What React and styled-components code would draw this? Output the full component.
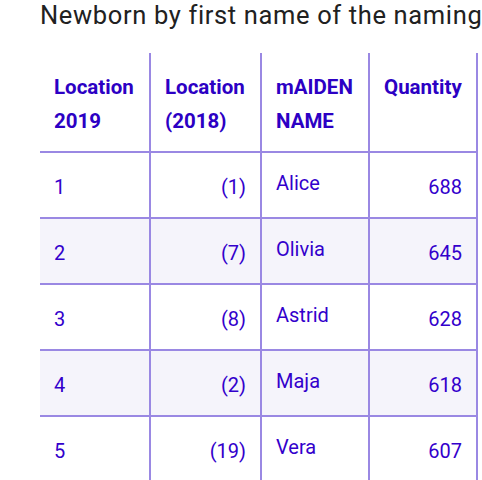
import React from "react";
import styled, { createGlobalStyle } from "styled-components";

const GlobalStyle = createGlobalStyle`
  body {
    margin: 0;
    background: #ffffff;
    font-family: Roboto, "Liberation Sans", Arial, sans-serif;
  }
`;

const rows = [
  { pos: 1, prev: "(1)", name: "Alice", qty: 688 },
  { pos: 2, prev: "(7)", name: "Olivia", qty: 645 },
  { pos: 3, prev: "(8)", name: "Astrid", qty: 628 },
  { pos: 4, prev: "(2)", name: "Maja", qty: 618 },
  { pos: 5, prev: "(19)", name: "Vera", qty: 607 },
];

const App = () => {
  return (
    <>
      <GlobalStyle />
      <Page>
        <Title>Newborn by first name of the naming</Title>
        <Table>
          <colgroup>
            <col style={{ width: 111 }} />
            <col style={{ width: 111 }} />
            <col style={{ width: 108 }} />
            <col style={{ width: 108 }} />
          </colgroup>
          <thead>
            <tr>
              <Th>Location<br />2019</Th>
              <Th>Location<br />(2018)</Th>
              <Th>mAIDEN<br />NAME</Th>
              <Th>Quantity</Th>
            </tr>
          </thead>
          <tbody>
            {rows.map((r) => (
              <Row key={r.pos} $striped={r.pos % 2 === 0}>
                <Td>{r.pos}</Td>
                <Td $right>{r.prev}</Td>
                <Td $raised>{r.name}</Td>
                <Td $right>{r.qty}</Td>
              </Row>
            ))}
          </tbody>
        </Table>
      </Page>
    </>
  );
};

export default App;

const Page = styled.div`
  padding-left: 40px;
  width: 442px;
`;

const Title = styled.h2`
  margin: 0 0 23px;
  font-size: 25.5px;
  line-height: 30px;
  letter-spacing: 0.64px;
  font-weight: 400;
  color: #212121;
  white-space: nowrap;
`;

const Table = styled.table`
  border-collapse: separate;
  border-spacing: 0;
  table-layout: fixed;
  width: 438px;
  font-size: 20px;
  line-height: 34px;
  color: #3300cc;
`;

const Th = styled.th`
  padding: 17px 12px 13px 14px;
  font-size: 20.5px;
  text-align: left;
  vertical-align: top;
  font-weight: 700;
  color: #2c00c4;
  white-space: nowrap;
  border-right: 2px solid #9a88e3;
  border-bottom: 2px solid #9a88e3;
`;

const Row = styled.tr`
  background: ${(p) => (p.$striped ? "#f5f4fb" : "#ffffff")};
`;

const Td = styled.td`
  height: 34px;
  padding: ${(p) => (p.$raised ? "13px 14px 17px" : "17px 14px 13px")};
  text-align: ${(p) => (p.$right ? "right" : "left")};
  vertical-align: top;
  white-space: nowrap;
  border-right: 2px solid #9a88e3;
  border-bottom: 2px solid #9a88e3;
`;
